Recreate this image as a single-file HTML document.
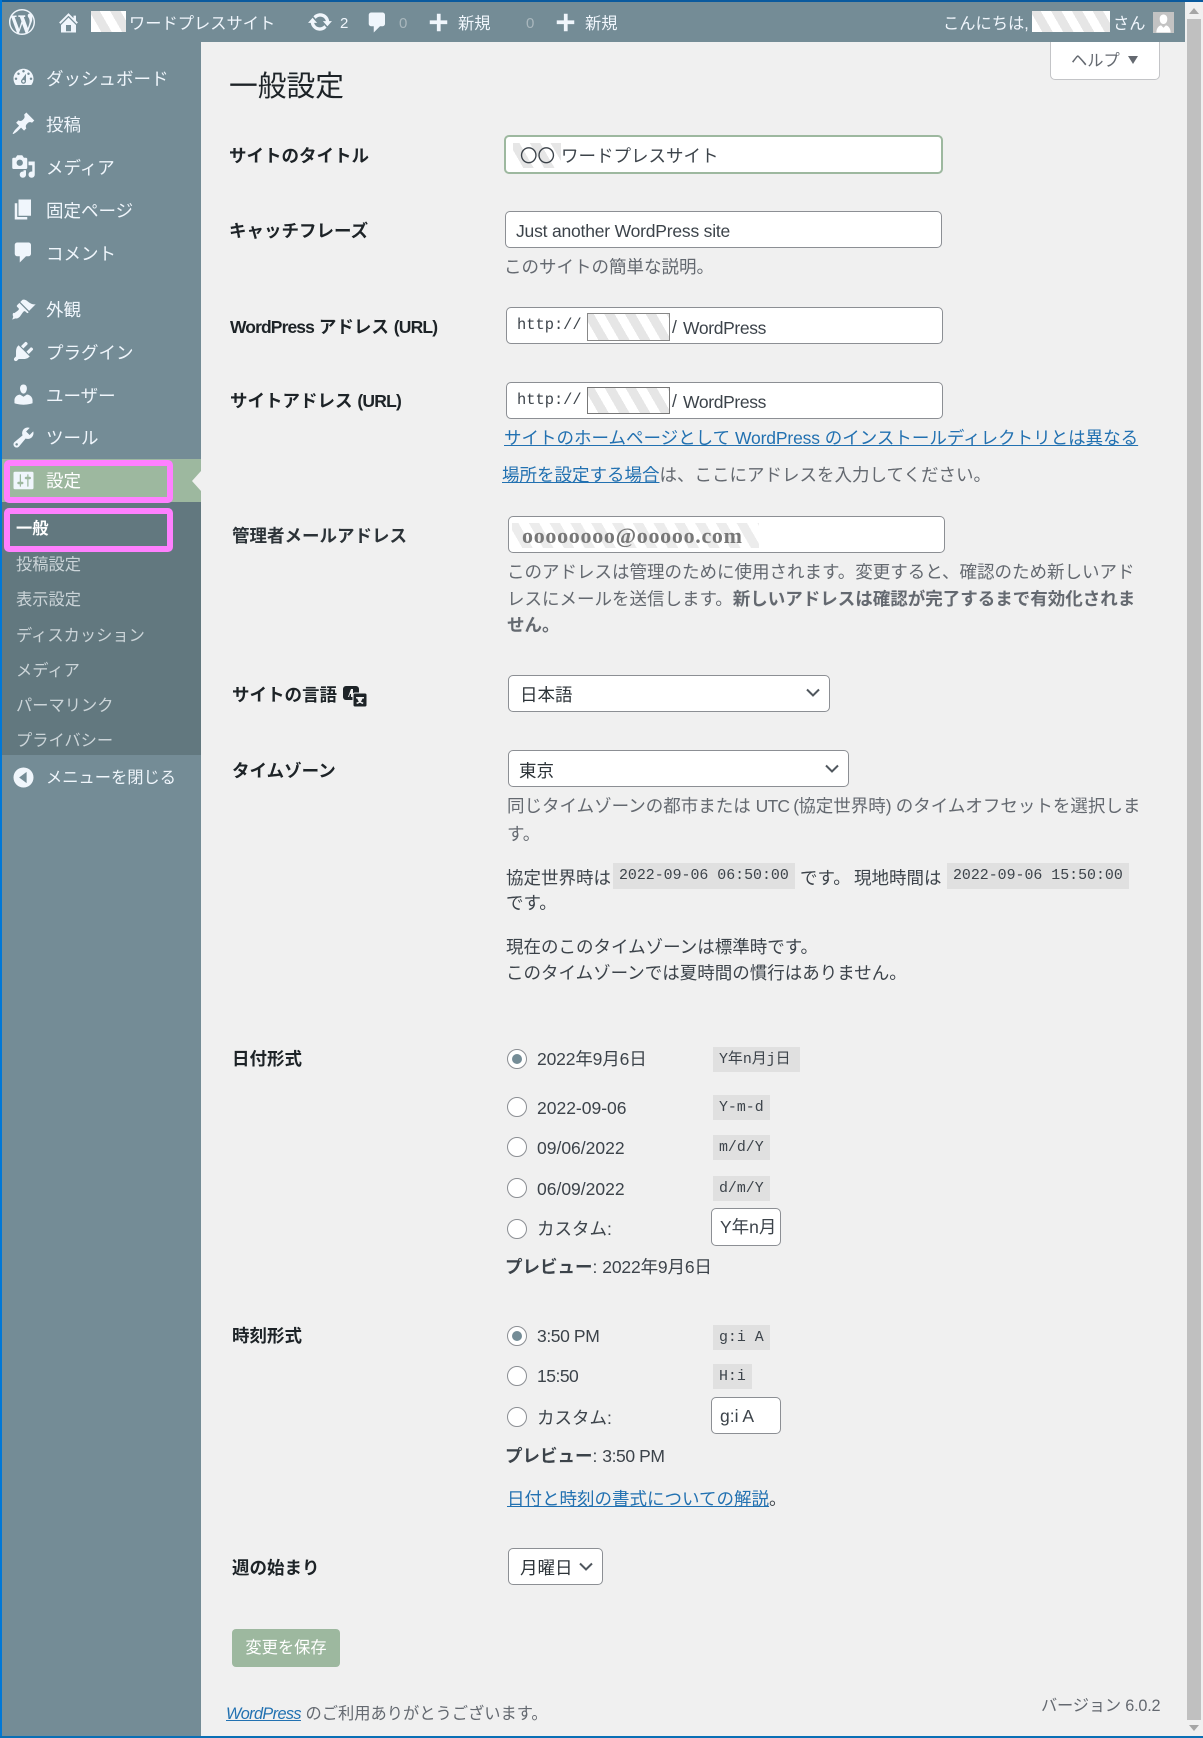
<!DOCTYPE html>
<html lang="ja"><head><meta charset="utf-8"><title>一般設定</title>
<style>
html,body{margin:0;padding:0;width:1203px;height:1738px;overflow:hidden;background:#f0f0f0}
body{position:relative;font-family:"Liberation Sans","Noto Sans CJK JP",sans-serif;font-size:17.5px;color:#3c434a}
.t{position:absolute;white-space:nowrap;line-height:26px;height:26px}
.b{position:absolute;box-sizing:border-box}
.lab{font-weight:700;color:#1d2327}
.m{color:#f0f6fc}
.s{color:#ccd5d9;font-size:16.25px}
.bar{color:#f0f6fc;font-size:16.25px}
.d{color:#646970}
.inp{position:absolute;box-sizing:border-box;background:#fff;border:1px solid #8c8f94;border-radius:5px}
.h{background:repeating-linear-gradient(60deg,#fff 0 9px,#e6e6e6 9px 18px)}
.code{position:absolute;box-sizing:border-box;background:#e0e0e0;height:25px;line-height:27px;font-family:"Liberation Mono","Noto Sans CJK JP",monospace;font-size:14.9px;padding-left:6px;white-space:nowrap;color:#3c434a}
.r{position:absolute;box-sizing:border-box;width:20px;height:20px;border-radius:50%;background:#fff;border:1px solid #8c8f94}
.r i{position:absolute;left:4px;top:4px;width:10px;height:10px;border-radius:50%;background:#748c96}
a{color:#2271b1;text-decoration:underline}
svg{position:absolute;display:block;fill:#f0f6fc}
.mono{font-family:"Liberation Mono",monospace;font-size:15.4px}
.w{letter-spacing:-.9px}
.u{letter-spacing:-.8px}
</style></head><body>

<!-- sidebar & admin bar -->
<div class="b" style="left:0;top:0;width:201px;height:1738px;background:#748c96"></div>
<div class="b" style="left:0;top:0;width:1185px;height:42px;background:#748c96"></div>
<div class="b" style="left:0;top:0;width:1203px;height:2px;background:#0a5a9e"></div>
<div class="b" style="left:0;top:0;width:2px;height:1738px;background:#0078d7"></div>
<div class="b" style="left:0;top:1736px;width:1203px;height:2px;background:#0a6fb5"></div>

<!-- scrollbar -->
<div class="b" style="left:1187px;top:19px;width:14px;height:1701px;background:#c0c0c0"></div>
<div class="b" style="left:1189px;top:8px;width:0;height:0;border-left:5px solid transparent;border-right:5px solid transparent;border-bottom:6px solid #a6a6a6"></div>
<div class="b" style="left:1189px;top:1725px;width:0;height:0;border-left:5px solid transparent;border-right:5px solid transparent;border-top:6px solid #a6a6a6"></div>

<!-- admin bar -->
<svg style="left:9px;top:9px" width="26" height="26" viewBox="0 0 20 20"><path d="M20 10c0-5.51-4.49-10-10-10C4.48 0 0 4.49 0 10c0 5.52 4.48 10 10 10 5.51 0 10-4.48 10-10zM7.78 15.37L4.37 6.22c.55-.02 1.17-.08 1.17-.08.5-.06.44-1.13-.06-1.11 0 0-1.45.11-2.37.11-.18 0-.37 0-.58-.01C4.12 2.69 6.87 1.11 10 1.11c2.33 0 4.45.87 6.05 2.34-.68-.11-1.65.39-1.65 1.58 0 .74.45 1.36.9 2.1.35.61.55 1.36.55 2.46 0 1.49-1.4 5-1.4 5l-3.03-8.37c.54-.02.82-.17.82-.17.5-.05.44-1.25-.06-1.22 0 0-1.44.12-2.38.12-.87 0-2.33-.12-2.33-.12-.5-.03-.56 1.2-.06 1.22l.92.08 1.26 3.41zM17.41 10c.24-.64.74-1.87.43-4.25.7 1.29 1.05 2.71 1.05 4.25 0 3.29-1.73 6.24-4.4 7.78.97-2.59 1.94-5.2 2.92-7.78zM6.1 18.09C3.12 16.65 1.11 13.53 1.11 10c0-1.3.23-2.48.72-3.59C3.25 10.3 4.67 14.2 6.1 18.09zm4.03-6.63l2.58 6.98c-.86.29-1.76.45-2.71.45-.79 0-1.57-.11-2.29-.33.81-2.38 1.62-4.74 2.42-7.1z"/></svg>
<svg style="left:56px;top:10px" width="25" height="25" viewBox="0 0 20 20"><path d="M16 8.5l1.53 1.53-1.06 1.06L10 4.62l-6.47 6.47-1.06-1.06L10 2.5l4 4v-2h2v4zm-6-2.46l6 5.99V18H4v-5.97zM12 17v-5H8v5h4z"/></svg>
<div class="b h" style="left:91px;top:11px;width:35px;height:21px"></div>
<div class="t bar" style="left:129px;top:11px">ワードプレスサイト</div>
<svg style="left:307px;top:9px" width="26" height="26" viewBox="0 0 20 20"><path d="M10.2 3.28c3.53 0 6.43 2.61 6.92 6h2.08l-3.5 4-3.5-4h2.32c-.45-1.97-2.21-3.45-4.32-3.45-1.45 0-2.73.71-3.54 1.78L4.95 5.66C6.23 4.2 8.11 3.28 10.2 3.28zm-.4 13.44c-3.52 0-6.43-2.61-6.92-6H.8l3.5-4c1.17 1.33 2.33 2.67 3.5 4H5.48c.45 1.97 2.21 3.45 4.32 3.45 1.45 0 2.73-.71 3.54-1.78l1.71 1.95c-1.28 1.46-3.15 2.38-5.25 2.38z"/></svg>
<div class="t bar" style="left:340px;top:11px;font-size:15px">2</div>
<svg style="left:365px;top:10px" width="25" height="25" viewBox="0 0 20 20"><path d="M5 2h9c1.1 0 2 .9 2 2v7c0 1.100-.9 2-2 2h-2l-5 5v-5H5c-1.100 0-2-.9-2-2V4c0-1.100.9-2 2-2z"/></svg>
<div class="t bar" style="left:399px;top:11px;font-size:15px;color:#a9b7bd">0</div>
<svg style="left:426px;top:10px" width="25" height="25" viewBox="0 0 20 20"><path d="M17 8.300v3h-5.300V17h-3v-5.700H3v-3h5.700V3h3v5.300z"/></svg>
<div class="t bar" style="left:458px;top:11px">新規</div>
<div class="t bar" style="left:526px;top:11px;font-size:15px;color:#a9b7bd">0</div>
<svg style="left:553px;top:10px" width="25" height="25" viewBox="0 0 20 20"><path d="M17 8.300v3h-5.300V17h-3v-5.700H3v-3h5.700V3h3v5.300z"/></svg>
<div class="t bar" style="left:585px;top:11px">新規</div>
<div class="t bar" style="left:943px;top:11px">こんにちは,</div>
<div class="b h" style="left:1032px;top:11px;width:78px;height:21px"></div>
<div class="t bar" style="left:1113px;top:11px">さん</div>
<div class="b" style="left:1153px;top:12px;width:21px;height:21px;background:#c3c3c3;overflow:hidden">
<svg style="left:1px;top:1px" width="19" height="20" viewBox="0 0 20 20"><path d="M10 11c-3 0-4-3-4-5.500C6 3 7.500 1 10 1s4 2 4 4.500S13 11 10 11zm-7.500 9c0-4 2-7 5-7.500L10 15l2.500-2.500c3 .5 5 3.500 5 7.500z" style="fill:#fff"/></svg></div>

<!-- sidebar menu -->
<svg style="left:11px;top:65px" width="25" height="25" viewBox="0 0 20 20"><path d="M3.760 16h12.480c1.100-1.370 1.760-3.110 1.760-5 0-4.420-3.580-8-8-8s-8 3.580-8 8c0 1.890.66 3.630 1.760 5zM10 4c.55 0 1 .45 1 1s-.45 1-1 1-1-.45-1-1 .45-1 1-1zM6 6c.55 0 1 .45 1 1s-.45 1-1 1-1-.45-1-1 .45-1 1-1zm8 0c.55 0 1 .45 1 1s-.45 1-1 1-1-.45-1-1 .45-1 1-1zm-5.370 5.550L12 7v6c0 1.100-.9 2-2 2s-2-.9-2-2c0-.57.24-1.080.63-1.450zM4 10c.55 0 1 .45 1 1s-.45 1-1 1-1-.45-1-1 .45-1 1-1zm12 0c.55 0 1 .45 1 1s-.45 1-1 1-1-.45-1-1 .45-1 1-1zm-5 3c0-.55-.45-1-1-1s-1 .45-1 1 .45 1 1 1 1-.45 1-1z"/></svg>
<div class="t m" style="left:46px;top:66px">ダッシュボード</div>
<svg style="left:11px;top:111px" width="25" height="25" viewBox="0 0 20 20"><path d="M10.440 3.020l1.820-1.820 6.360 6.350-1.830 1.820c-1.050-.68-2.480-.57-3.410.36l-.75.75c-.92.93-1.040 2.350-.35 3.410l-1.830 1.820-2.410-2.410-2.800 2.790c-.42.42-3.380 2.710-3.800 2.290s1.860-3.390 2.280-3.810l2.790-2.790L4.100 9.360l1.830-1.820c1.050.69 2.480.57 3.400-.36l.75-.75c.93-.92 1.050-2.350.36-3.410z"/></svg>
<div class="t m" style="left:46px;top:112px">投稿</div>
<svg style="left:11px;top:154px" width="25" height="25" viewBox="0 0 20 20"><path d="M13 11V4c0-.55-.45-1-1-1h-1.670L9 1H5L3.670 3H2c-.55 0-1 .45-1 1v7c0 .55.45 1 1 1h10c.55 0 1-.45 1-1zM7 4.500c1.380 0 2.500 1.120 2.500 2.500S8.380 9.500 7 9.500 4.500 8.380 4.500 7 5.620 4.500 7 4.500zM14 6h5v10.500c0 1.380-1.120 2.500-2.500 2.500S14 17.880 14 16.500s1.120-2.500 2.500-2.500c.17 0 .34.02.5.05V9h-3V6zm-4 8.050V13h2v3.500c0 1.380-1.120 2.500-2.500 2.500S7 17.880 7 16.500 8.120 14 9.500 14c.17 0 .34.02.5.05z"/></svg>
<div class="t m" style="left:46px;top:155px">メディア</div>
<svg style="left:11px;top:197px" width="25" height="25" viewBox="0 0 20 20"><path d="M6 15V2h10v13H6zm-1 1h8v2H3V5h2v11z"/></svg>
<div class="t m" style="left:46px;top:198px">固定ページ</div>
<svg style="left:11px;top:240px" width="25" height="25" viewBox="0 0 20 20"><path d="M5 2h9c1.100 0 2 .9 2 2v7c0 1.100-.9 2-2 2h-2l-5 5v-5H5c-1.100 0-2-.9-2-2V4c0-1.100.9-2 2-2z"/></svg>
<div class="t m" style="left:46px;top:241px">コメント</div>
<svg style="left:11px;top:297px" width="25" height="25" viewBox="0 0 20 20"><path d="M14.480 11.060L7.410 3.990l1.500-1.500c.5-.56 2.300-.47 3.510.32 1.210.8 1.430 1.280 2.910 2.100 1.180.64 2.450 1.260 4.450.85zm-.71.71L6.700 4.700 4.930 6.470c-.39.39-.39 1.020 0 1.410l1.060 1.060c.39.39.39 1.030 0 1.420-.6.600-1.430 1.110-2.210 1.690-.35.26-.7.53-1.010.84C1.430 12.230 1 14 1.800 15.800l-.8 2.300 2.500-1c1.400.3 2.600-.4 3.500-1.300.4-.4.870-1.300 1.420-2.010.58-.78 1.090-1.610 1.690-2.210.39-.39 1.030-.39 1.420 0l1.060 1.060c.39.39 1.020.39 1.410 0z"/></svg>
<div class="t m" style="left:46px;top:297px">外観</div>
<svg style="left:11px;top:339px" width="25" height="25" viewBox="0 0 20 20"><path d="M13.110 4.360L9.870 7.600 8 5.730l3.240-3.240c.35-.34 1.050-.2 1.560.32.52.51.66 1.210.31 1.550zm-8 1.770l.91-1.120 9.010 9.010-1.190.84c-.71.71-2.630 1.160-3.820 1.160H6.140L4.900 17.260c-.59.59-1.540.59-2.120 0-.59-.58-.59-1.530 0-2.120l1.240-1.240v-3.880c0-1.130.4-3.190 1.090-3.890zm7.260 3.970l3.240-3.240c.34-.35 1.040-.21 1.550.31.52.51.66 1.210.31 1.550l-3.240 3.250z"/></svg>
<div class="t m" style="left:46px;top:340px">プラグイン</div>
<svg style="left:11px;top:382px" width="25" height="25" viewBox="0 0 20 20"><path d="M10 9.250c-2.270 0-2.730-3.440-2.730-3.440C7 4.020 7.820 2 9.970 2c2.160 0 2.980 2.020 2.710 3.810 0 0-.41 3.440-2.680 3.440zm0 2.570L12.720 10c2.390 0 4.520 2.330 4.520 4.530v2.490s-3.650 1.130-7.240 1.130c-3.650 0-7.240-1.130-7.240-1.130v-2.490c0-2.250 1.940-4.480 4.470-4.480z"/></svg>
<div class="t m" style="left:46px;top:383px">ユーザー</div>
<svg style="left:11px;top:425px" width="25" height="25" viewBox="0 0 20 20"><path d="M16.680 9.770c-1.340 1.340-3.300 1.670-4.950.99l-5.410 6.520c-.99.99-2.590.99-3.580 0s-.99-2.590 0-3.570l6.520-5.420c-.68-1.650-.35-3.610.99-4.950 1.280-1.280 3.120-1.620 4.720-1.060l-2.890 2.890 2.820 2.820 2.860-2.870c.53 1.580.18 3.390-1.080 4.650zM3.810 16.210c.4.39 1.040.39 1.430 0 .4-.4.4-1.040 0-1.430-.39-.4-1.030-.4-1.430 0-.39.39-.39 1.030 0 1.430z"/></svg>
<div class="t m" style="left:46px;top:425px">ツール</div>

<!-- active -->
<div class="b" style="left:2px;top:459px;width:199px;height:43px;background:#9db89f"></div>
<div class="b" style="left:2px;top:502px;width:199px;height:253px;background:#62787f"></div>
<div class="b" style="left:192px;top:471px;width:0;height:0;border-top:10px solid transparent;border-bottom:10px solid transparent;border-right:9px solid #f0f0f0"></div>
<svg style="left:11px;top:468px" width="25" height="25" viewBox="0 0 20 20"><path d="M18 16V4c0-.55-.45-1-1-1H3c-.55 0-1 .45-1 1v12c0 .55.45 1 1 1h14c.55 0 1-.45 1-1zM8 11h1c.55 0 1 .45 1 1s-.45 1-1 1H8v1.500c0 .28-.22.5-.5.5s-.5-.22-.5-.5V13H6c-.55 0-1-.45-1-1s.45-1 1-1h1V5.500c0-.28.22-.5.5-.5s.5.22.5.5V11zm5-2h-1c-.55 0-1-.45-1-1s.45-1 1-1h1V5.500c0-.28.22-.5.5-.5s.5.22.5.5V7h1c.55 0 1 .45 1 1s-.45 1-1 1h-1v5.500c0 .28-.22.5-.5.5s-.5-.22-.5-.5V9z"/></svg>
<div class="t" style="left:46px;top:468px;color:#fff">設定</div>
<div class="b" style="left:4px;top:460px;width:169px;height:43px;border:6px solid #ff80ff;border-radius:5px"></div>
<div class="b" style="left:4px;top:508px;width:169px;height:44px;border:6px solid #ff80ff;border-radius:5px"></div>
<div class="t" style="left:16px;top:516px;color:#fff;font-size:16.25px;font-weight:700">一般</div>
<div class="t s" style="left:16px;top:552px">投稿設定</div>
<div class="t s" style="left:16px;top:587px">表示設定</div>
<div class="t s" style="left:16px;top:623px">ディスカッション</div>
<div class="t s" style="left:16px;top:658px">メディア</div>
<div class="t s" style="left:16px;top:693px">パーマリンク</div>
<div class="t s" style="left:16px;top:728px">プライバシー</div>
<svg style="left:11px;top:765px" width="25" height="25" viewBox="0 0 20 20"><path fill-rule="evenodd" d="M10 2a8 8 0 1 1 0 16 8 8 0 0 1 0-16zm2.500 3.500L6.500 10l6 4.500z"/></svg>
<div class="t m" style="left:46px;top:765px;font-size:16.25px">メニューを閉じる</div>

<!-- help -->
<div class="b" style="left:1050px;top:42px;width:110px;height:38px;background:#fff;border:1px solid #c3c4c7;border-top:0;border-radius:0 0 5px 5px"></div>
<div class="t d" style="left:1071px;top:48px;font-size:16.25px">ヘルプ</div>
<div class="b" style="left:1128px;top:56px;width:0;height:0;border-left:5px solid transparent;border-right:5px solid transparent;border-top:8px solid #646970"></div>

<!-- heading -->
<div class="t" style="left:229px;top:67px;font-size:28.750px;line-height:40px;height:40px;color:#1d2327">一般設定</div>

<!-- site title -->
<div class="t lab" style="left:229px;top:143px">サイトのタイトル</div>
<div class="inp" style="left:504px;top:135px;width:439px;height:39px;border:2px solid #9db89f"></div>
<div class="b" style="left:513px;top:143px;width:48px;height:25px;background:repeating-linear-gradient(60deg,#fff 0 9px,#e6e6e6 9px 18px)"></div>
<div class="t" style="left:520px;top:143px;font-size:17.500px">〇〇</div>
<div class="t" style="left:561px;top:143px">ワードプレスサイト</div>

<!-- tagline -->
<div class="t lab" style="left:229px;top:218px">キャッチフレーズ</div>
<div class="inp" style="left:505px;top:211px;width:437px;height:37px"></div>
<div class="t" style="left:516px;top:218px;letter-spacing:-.2px">Just another WordPress site</div>
<div class="t d" style="left:504px;top:254px">このサイトの簡単な説明。</div>

<!-- wp address -->
<div class="t lab" style="left:230px;top:314px"><span class="w">WordPress</span> アドレス <span class="u">(URL)</span></div>
<div class="inp" style="left:506px;top:307px;width:437px;height:37px"></div>
<div class="t mono" style="left:517px;top:312px">http://</div>
<div class="b h" style="left:587px;top:313px;width:83px;height:28px;border:1px solid #888"></div>
<div class="t" style="left:672px;top:314px">/</div>
<div class="t" style="left:683px;top:315px;letter-spacing:-.35px">WordPress</div>

<!-- site address -->
<div class="t lab" style="left:230px;top:388px">サイトアドレス <span class="u">(URL)</span></div>
<div class="inp" style="left:506px;top:382px;width:437px;height:37px"></div>
<div class="t mono" style="left:517px;top:387px">http://</div>
<div class="b h" style="left:587px;top:387px;width:83px;height:27px;border:1px solid #777"></div>
<div class="t" style="left:672px;top:388px">/</div>
<div class="t" style="left:683px;top:389px;letter-spacing:-.35px">WordPress</div>
<div class="t" style="left:504px;top:425px"><a>サイトのホームページとして <span style="letter-spacing:-.15px">WordPress</span> のインストールディレクトリとは異なる</a></div>
<div class="t d" style="left:502px;top:462px"><a>場所を設定する場合</a>は、ここにアドレスを入力してください。</div>

<!-- email -->
<div class="t lab" style="left:232px;top:523px;color:#2c3338">管理者メールアドレス</div>
<div class="inp" style="left:508px;top:516px;width:437px;height:37px"></div>
<div class="b" style="left:512px;top:523px;width:247px;height:25px;background:repeating-linear-gradient(60deg,#fff 0 9px,#ececec 9px 18px)"></div>
<div class="t" style="left:522px;top:523px;font-family:'Liberation Serif',serif;font-weight:700;font-size:22px;letter-spacing:.7px;color:#777">oooooooo@ooooo.com</div>
<div class="t d" style="left:507px;top:559px">このアドレスは管理のために使用されます。変更すると、確認のため新しいアド</div>
<div class="t d" style="left:507px;top:586px">レスにメールを送信します。<b>新しいアドレスは確認が完了するまで有効化されま</b></div>
<div class="t d" style="left:507px;top:612px"><b>せん。</b></div>

<!-- language -->
<div class="t lab" style="left:232px;top:682px">サイトの言語</div>
<svg style="left:343px;top:686px;fill:#1d2327" width="25" height="22" viewBox="0 0 25 22"><rect x="0" y="0" width="16" height="14" rx="3"/><rect x="10" y="7" width="14" height="14" rx="2" style="stroke:#f0f0f0;stroke-width:1"/><path d="M5 11L8 3h2v8h-2V8H7l-1 3z" style="fill:#f0f0f0"/><path d="M13 11h8v1.500h-1.500c-.4 1.300-1 2.300-1.700 3 .8.500 1.700.9 2.700 1.100l-.6 1.400c-1.200-.3-2.200-.8-3-1.400-.8.600-1.800 1.100-3 1.400l-.6-1.400c1-.2 1.900-.6 2.600-1.100-.7-.7-1.300-1.700-1.600-3H13z" style="fill:#f0f0f0"/></svg>
<div class="inp" style="left:508px;top:675px;width:322px;height:37px"></div>
<div class="t" style="left:520px;top:682px;color:#2c3338">日本語</div>
<svg style="left:806px;top:688px" width="14" height="10" viewBox="0 0 14 10"><path d="M1 1.500l6 6 6-6" style="fill:none;stroke:#50575e;stroke-width:2"/></svg>

<!-- timezone -->
<div class="t lab" style="left:232px;top:758px">タイムゾーン</div>
<div class="inp" style="left:508px;top:750px;width:341px;height:37px"></div>
<div class="t" style="left:519px;top:758px;color:#2c3338">東京</div>
<svg style="left:825px;top:764px" width="14" height="10" viewBox="0 0 14 10"><path d="M1 1.500l6 6 6-6" style="fill:none;stroke:#50575e;stroke-width:2"/></svg>
<div class="t d" style="left:507px;top:793px">同じタイムゾーンの都市または <span class="u">UTC (</span>協定世界時<span class="u">)</span> のタイムオフセットを選択しま</div>
<div class="t d" style="left:507px;top:821px">す。</div>
<div class="t" style="left:506px;top:865px">協定世界時は</div>
<div class="code" style="left:613px;top:863px;width:182px;height:26px">2022-09-06 06:50:00</div>
<div class="t" style="left:800px;top:865px">です。</div>
<div class="t" style="left:854px;top:865px">現地時間は</div>
<div class="code" style="left:947px;top:863px;width:182px;height:26px">2022-09-06 15:50:00</div>
<div class="t" style="left:506px;top:890px">です。</div>
<div class="t" style="left:506px;top:934px">現在のこのタイムゾーンは標準時です。</div>
<div class="t" style="left:506px;top:960px">このタイムゾーンでは夏時間の慣行はありません。</div>

<!-- date format -->
<div class="t lab" style="left:232px;top:1046px">日付形式</div>
<div class="r" style="left:507px;top:1049px"><i></i></div>
<div class="t" style="left:537px;top:1046px;letter-spacing:-.15px">2022年9月6日</div>
<div class="code" style="left:713px;top:1047px;width:87px">Y年n月j日</div>
<div class="r" style="left:507px;top:1097px"></div>
<div class="t" style="left:537px;top:1095px">2022-09-06</div>
<div class="code" style="left:713px;top:1095px;width:57px">Y-m-d</div>
<div class="r" style="left:507px;top:1137px"></div>
<div class="t" style="left:537px;top:1135px">09/06/2022</div>
<div class="code" style="left:713px;top:1135px;width:57px">m/d/Y</div>
<div class="r" style="left:507px;top:1178px"></div>
<div class="t" style="left:537px;top:1176px">06/09/2022</div>
<div class="code" style="left:713px;top:1176px;width:57px">d/m/Y</div>
<div class="r" style="left:507px;top:1219px"></div>
<div class="t" style="left:537px;top:1216px">カスタム:</div>
<div class="inp" style="left:711px;top:1208px;width:70px;height:38px"></div>
<div class="t" style="left:720px;top:1214px">Y年n月</div>
<div class="t" style="left:505px;top:1254px"><b>プレビュー</b>: <span style="letter-spacing:-.15px">2022年9月6日</span></div>

<!-- time format -->
<div class="t lab" style="left:232px;top:1323px">時刻形式</div>
<div class="r" style="left:507px;top:1326px"><i></i></div>
<div class="t" style="left:537px;top:1323px;letter-spacing:-.4px">3:50 PM</div>
<div class="code" style="left:713px;top:1325px;width:57px">g:i A</div>
<div class="r" style="left:507px;top:1366px"></div>
<div class="t" style="left:537px;top:1363px;letter-spacing:-.5px">15:50</div>
<div class="code" style="left:713px;top:1364px;width:39px">H:i</div>
<div class="r" style="left:507px;top:1407px"></div>
<div class="t" style="left:537px;top:1405px">カスタム:</div>
<div class="inp" style="left:711px;top:1397px;width:70px;height:37px"></div>
<div class="t" style="left:720px;top:1403px">g:i A</div>
<div class="t" style="left:505px;top:1443px"><b>プレビュー</b>: <span style="letter-spacing:-.4px">3:50 PM</span></div>
<div class="t" style="left:507px;top:1486px"><a>日付と時刻の書式についての解説</a>。</div>

<!-- week -->
<div class="t lab" style="left:232px;top:1555px">週の始まり</div>
<div class="inp" style="left:508px;top:1548px;width:95px;height:37px"></div>
<div class="t" style="left:520px;top:1555px;color:#2c3338">月曜日</div>
<svg style="left:579px;top:1562px" width="14" height="10" viewBox="0 0 14 10"><path d="M1 1.500l6 6 6-6" style="fill:none;stroke:#50575e;stroke-width:2"/></svg>

<!-- save -->
<div class="b" style="left:232px;top:1629px;width:108px;height:38px;background:#9db89f;border-radius:4px;color:#fff;font-size:16.25px;line-height:39px;text-align:center">変更を保存</div>

<!-- footer -->
<div class="t d" style="left:226px;top:1701px;font-size:16.25px"><a style="font-style:italic;letter-spacing:-.6px">WordPress</a> のご利用ありがとうございます。</div>
<div class="t d" style="left:1041px;top:1693px;font-size:16.25px;letter-spacing:-.2px">バージョン 6.0.2</div>
</body></html>
